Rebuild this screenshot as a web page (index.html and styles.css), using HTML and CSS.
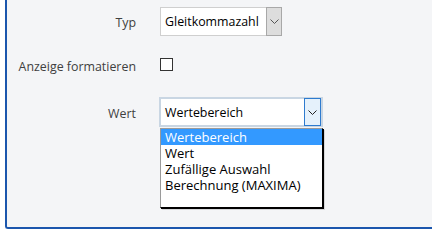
FILE: index.html
```html
<!DOCTYPE html>
<html lang="de">
<head>
    <meta charset="UTF-8">
    <title>Variable</title>
    <link rel="stylesheet" href="styles.css">
</head>
<body>

    <div class="panel">
        <!-- Typ -->
        <div class="row row-typ">
            <label class="row-label">Typ</label>
            <div class="select select-typ">
                <span class="select-text">Gleitkommazahl</span>
                <span class="select-btn">
                    <svg width="9" height="5" viewBox="0 0 9 5"><path d="M0.5 0.5 L4.5 4.5 L8.5 0.5" fill="none" stroke="#555" stroke-width="1"/></svg>
                </span>
            </div>
        </div>

        <!-- Anzeige formatieren -->
        <div class="row row-check">
            <label class="row-label">Anzeige formatieren</label>
            <span class="checkbox"></span>
        </div>

        <!-- Wert -->
        <div class="row row-wert">
            <label class="row-label">Wert</label>
            <div class="select-wrap">
                <div class="select select-wert">
                    <span class="select-text">Wertebereich</span>
                    <span class="select-btn">
                        <svg width="9" height="5" viewBox="0 0 9 5"><path d="M0.5 0.5 L4.5 4.5 L8.5 0.5" fill="none" stroke="#222" stroke-width="1"/></svg>
                    </span>
                </div>
                <ul class="listbox">
                    <li class="selected">Wertebereich</li>
                    <li>Wert</li>
                    <li>Zufällige Auswahl</li>
                    <li>Berechnung (MAXIMA)</li>
                </ul>
            </div>
        </div>
    </div>

</body>
</html>
```

FILE: styles.css
```css
* {
    margin: 0;
    padding: 0;
    box-sizing: border-box;
}

body {
    font-family: 'Open Sans', 'Noto Sans', sans-serif;
    background-color: #ffffff;
    overflow: hidden;
}

.panel {
    margin-left: 5px;
    width: 440px;
    height: 229px;
    background-color: #f4f5f7;
    border-left: 2px solid #1b56ad;
    border-bottom: 2px solid #1b56ad;
    border-bottom-left-radius: 3px;
    padding-top: 7px;
}

.row {
    display: grid;
    grid-template-columns: 129px auto;
    column-gap: 24px;
    align-items: center;
    justify-items: start;
}

.row-label {
    justify-self: end;
    font-size: 12.4px;
    color: #404040;
    padding-top: 2px;
}

.row-check {
    height: 29px;
    margin-top: 15px;
}

.row-wert {
    margin-top: 17px;
}

/* Select boxes */
.select {
    display: flex;
    align-items: stretch;
    background-color: #ffffff;
    font-size: 12.4px;
    color: #000;
}

.select-text {
    flex: 1;
    display: flex;
    align-items: center;
    padding-left: 4px;
}

.select-btn {
    display: flex;
    align-items: center;
    justify-content: center;
}

.select-typ {
    width: 122px;
    height: 29px;
    border: 1px solid #cfcfcf;
}

.select-typ .select-btn {
    width: 16px;
    background-color: #dddddd;
    border: 1px solid #a8a8a8;
    margin: -1px -1px -1px 0;
}

.select-wrap {
    position: relative;
    margin-left: -1px;
}

.select-wert {
    width: 164px;
    height: 30px;
    border: 2px solid #c9d6e3;
}

.select-wert .select-btn {
    width: 17px;
    background-color: #e5f1fb;
    border: 1px solid #2e7bcf;
    margin: -1px 0 -1px 0;
}

.listbox {
    position: absolute;
    left: 1px;
    top: 31px;
    width: 163px;
    height: 80px;
    list-style: none;
    background-color: #ffffff;
    border: 1px solid #000;
    border-left-color: #9a9a9a;
    border-top-color: #9a9a9a;
    box-shadow: 1px 1px 0 #000, 2px 2px 0 rgba(0, 0, 0, 0.12);
    font-size: 13px;
    color: #000;
}

.listbox li {
    height: 16px;
    line-height: 16px;
    padding-left: 4px;
}

.listbox li.selected {
    background-color: #3399ff;
    color: #ffffff;
}

/* Checkbox */
.checkbox {
    display: block;
    width: 13px;
    height: 13px;
    border: 1px solid #333;
    background-color: #fff;
    margin-top: -2px;
}
```
